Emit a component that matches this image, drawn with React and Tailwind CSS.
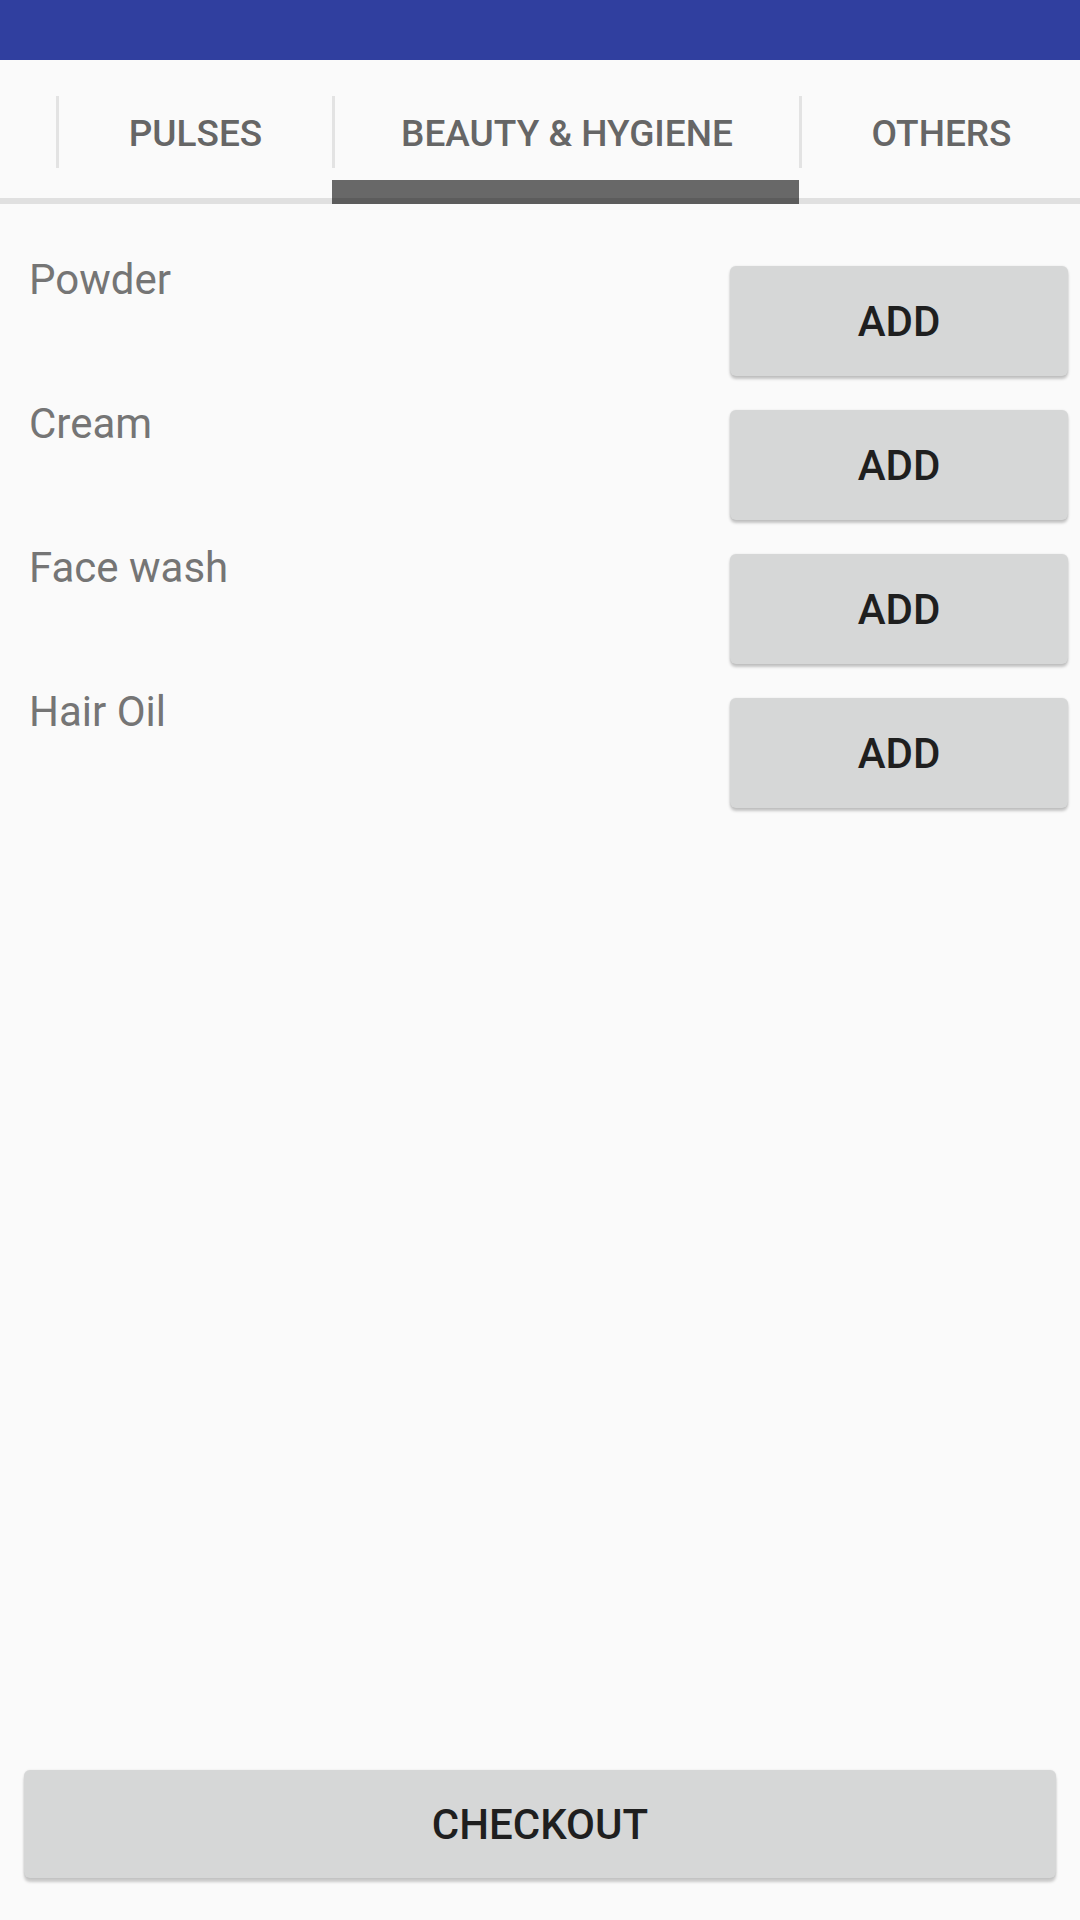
import React from "react";

const items = ["Powder", "Cream", "Face wash", "Hair Oil"];

const tabs = [
  { label: "PULSES", width: "w-[276px]" },
  { label: "BEAUTY & HYGIENE", width: "w-[467px]", active: true },
  { label: "OTHERS", width: "w-[282px]" },
];

const App = () => {
  return (
    <div className="w-[1080px] h-[1920px] flex flex-col bg-[#fafafa] font-['Roboto',sans-serif] overflow-hidden">
      {/* Status bar */}
      <div className="h-[60px] bg-[#303f9f] shrink-0" />

      {/* Tabs */}
      <div className="relative h-[144px] shrink-0">
        <div className="flex h-[138px]">
          <div className="w-[56px] shrink-0" />
          {tabs.map((tab) => (
            <div key={tab.label} className={`relative flex shrink-0 ${tab.width}`}>
              <div className="mt-[36px] h-[72px] w-[3px] bg-[#e3e3e3]" />
              <div className="flex-1 flex items-center justify-center pt-[9px] text-[37px] leading-[44px] font-medium text-[#666666] whitespace-nowrap">
                {tab.label}
              </div>
              {tab.active && (
                <div className="absolute left-0 right-0 top-[120px] h-[24px] bg-[#686868]" />
              )}
            </div>
          ))}
        </div>
        <div className="h-[6px] bg-[#e0e0e0]" />
        <div className="absolute left-[332px] w-[467px] top-[138px] h-[6px] bg-[#5c5c5c]" />
      </div>

      {/* Item list */}
      <div className="flex-1 pt-[50px]">
        {items.map((name) => (
          <div key={name} className="flex justify-between h-[144px]">
            <span className="pl-[29px] pt-[1px] text-[42px] leading-[49px] text-[#757575]">
              {name}
            </span>
            <button className="mt-[12px] mr-[12px] w-[338px] h-[110px] rounded-[6px] bg-[#d6d7d7] text-[42px] font-medium text-[#1f1f1f] shadow-[0_3px_3px_rgba(0,0,0,0.22),0_0_2px_rgba(0,0,0,0.1)]">
              ADD
            </button>
          </div>
        ))}
      </div>

      {/* Checkout */}
      <div className="px-[24px] pb-[42px]">
        <button className="w-full h-[108px] rounded-[6px] bg-[#d6d7d7] text-[42px] font-medium text-[#1f1f1f] shadow-[0_4px_3px_rgba(0,0,0,0.2),0_0_2px_rgba(0,0,0,0.1)]">
          CHECKOUT
        </button>
      </div>
    </div>
  );
};

export default App;
